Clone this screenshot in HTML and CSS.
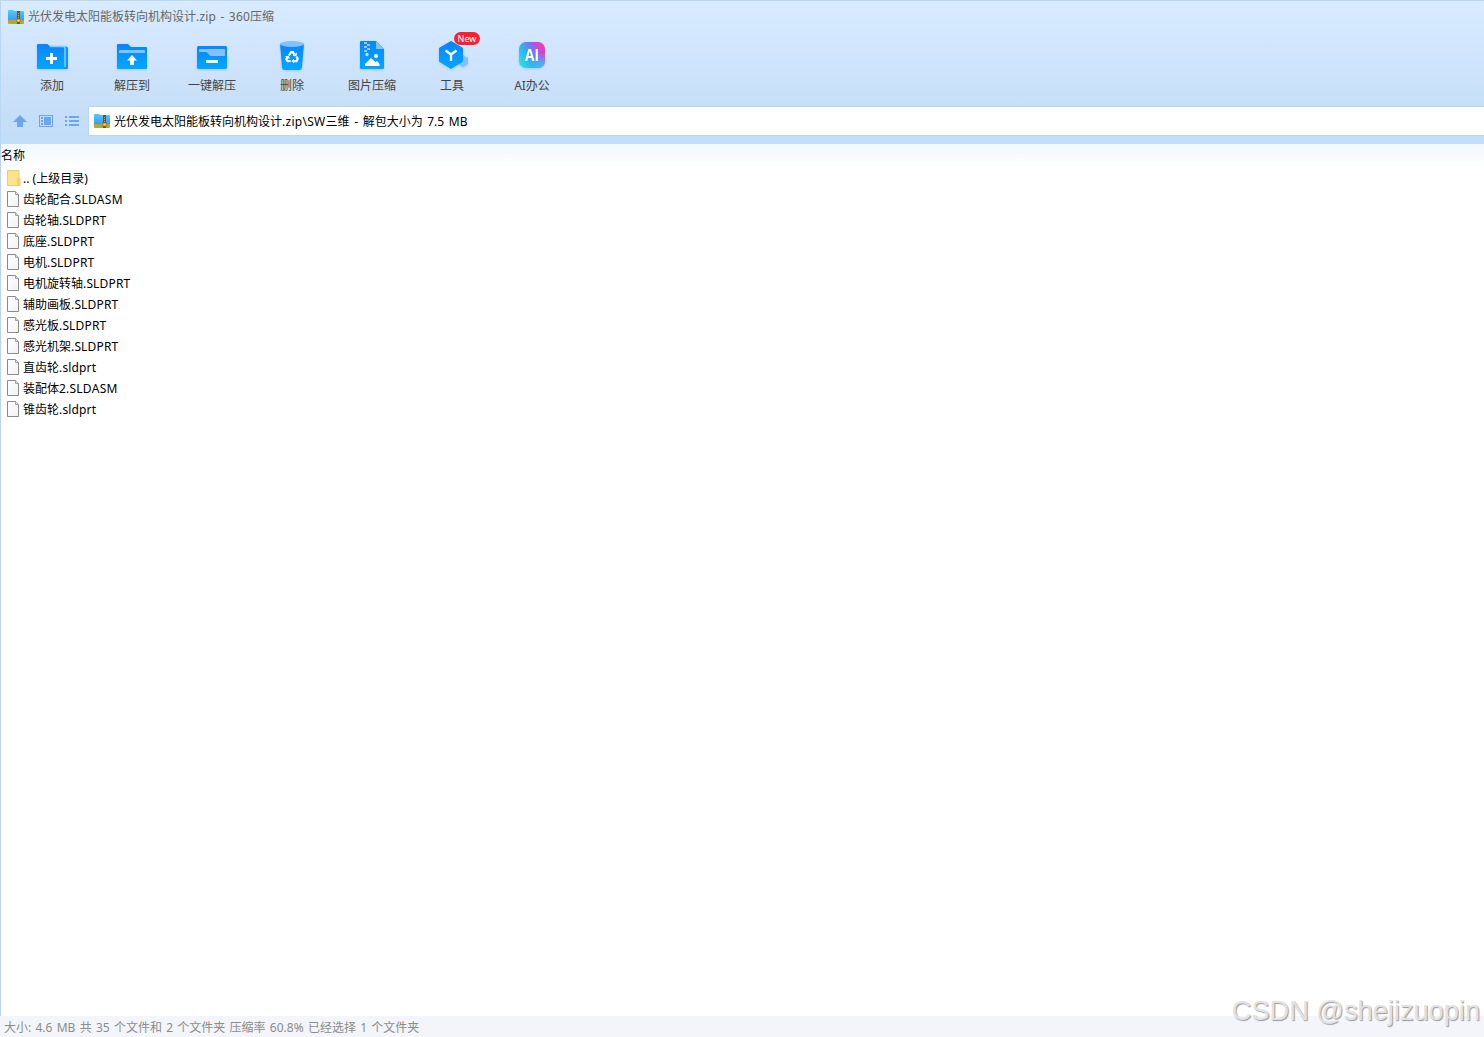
FILE: index.html
```html
<!DOCTYPE html>
<html lang="zh-CN">
<head>
    <meta charset="UTF-8">
    <meta name="viewport" content="width=device-width, initial-scale=1.0">
    <title>360压缩</title>
    <link rel="stylesheet" href="styles.css">
</head>
<body>
    <!-- shared shapes -->
    <svg class="defs" width="0" height="0">
        <defs>
            <linearGradient id="blue" x1="0" y1="0" x2="0" y2="1">
                <stop offset="0" stop-color="#0a84ff"/>
                <stop offset="1" stop-color="#00a8ff"/>
            </linearGradient>
            <linearGradient id="sky" x1="0" y1="0" x2="0" y2="1">
                <stop offset="0" stop-color="#5cc8fa"/>
                <stop offset="1" stop-color="#2ba0ee"/>
            </linearGradient>
            <linearGradient id="rainbow" x1="0" y1="0.7" x2="1" y2="0.2">
                <stop offset="0" stop-color="#22e0e4"/>
                <stop offset="0.3" stop-color="#2fb4f0"/>
                <stop offset="0.55" stop-color="#6a7cf2"/>
                <stop offset="0.75" stop-color="#c14be6"/>
                <stop offset="1" stop-color="#f83a9c"/>
            </linearGradient>
            <radialGradient id="rainbowCorner" cx="0.9" cy="1" r="0.6">
                <stop offset="0" stop-color="#35c8f0"/>
                <stop offset="1" stop-color="#35c8f0" stop-opacity="0"/>
            </radialGradient>
            <linearGradient id="paper" x1="0" y1="0" x2="1" y2="1">
                <stop offset="0" stop-color="#ffffff"/>
                <stop offset="1" stop-color="#f1f3f4"/>
            </linearGradient>
            <symbol id="zip" viewBox="0 0 16 14">
                <path d="M0 1q0-1 1-1h4l1.500 1H15q1 0 1 1v9H0z" fill="url(#sky)"/>
                <rect y="10" width="16" height="2" fill="#f58a1c"/>
                <path d="M0 12h16v1q0 1-1 1H1q-1 0-1-1z" fill="#7cc142"/>
                <rect x="9" y="1" width="3" height="13" fill="#8a4a16"/>
                <path d="M10 3h1v1h-1zM10 5h1v1h-1zM10 7h1v1h-1z" fill="#e0a050"/>
                <rect x="9" y="9" width="3" height="3" fill="#ffe36a" stroke="#a8620c" stroke-width=".7"/>
            </symbol>
            <symbol id="file" viewBox="0 0 12 16">
                <path d="M.5.5h8l3 3v12H.5z" fill="url(#paper)" stroke="#8b8b8b"/>
                <path d="M8.500.5v3h3" fill="#d8dcde" stroke="#a2a2a2"/>
            </symbol>
        </defs>
    </svg>

    <div class="window">
        <div class="top">
            <div class="titlebar">
                <svg class="zip-icon" width="16" height="14"><use href="#zip"/></svg>
                <span>光伏发电太阳能板转向机构设计<span class="title-zip">.zip - 360</span>压缩</span>
            </div>

            <div class="toolbar">
                <div class="tool">
                    <svg width="36" height="36" viewBox="0 0 36 36">
                        <path d="M29 6.500h3q2 0 2 2V28q0 1-1 1h-4z" fill="#0797ff"/>
                        <path d="M3 5q0-1 1-1h9.500l3 3H28q2 0 2 2v20H4q-1 0-1-1z" fill="url(#blue)"/>
                        <path d="M16 6.500h13.500q1.500 0 1.500 1.500v19" fill="none" stroke="#8ccbff" stroke-width="1.500"/>
                        <path d="M12 18.500h11M17.500 13v11" stroke="#fff" stroke-width="3"/>
                    </svg>
                    <span>添加</span>
                </div>
                <div class="tool">
                    <svg width="36" height="36" viewBox="0 0 36 36">
                        <path d="M3 5q0-1 1-1h10l3 3h15q1 0 1 1v20q0 1-1 1H4q-1 0-1-1z" fill="url(#blue)"/>
                        <path d="M5 13v-2q0-1 1-1h24q1 0 1 1v2z" fill="#80c3ff"/>
                        <path d="M18 15l5 5.500h-3V25h-4v-4.500h-3z" fill="#fff"/>
                    </svg>
                    <span>解压到</span>
                </div>
                <div class="tool">
                    <svg width="36" height="36" viewBox="0 0 36 36">
                        <rect x="3" y="6" width="30" height="23" rx="1.500" fill="url(#blue)"/>
                        <path d="M5 12v-2q0-1 1-1h24q1 0 1 1v6H16.500L12.500 12z" fill="#80c3ff"/>
                        <rect x="12" y="20" width="12" height="3" rx="1" fill="#fff"/>
                    </svg>
                    <span>一键解压</span>
                </div>
                <div class="tool">
                    <svg width="36" height="36" viewBox="0 0 36 36">
                        <path d="M6 4h24l-2 23.500q-.3 2.500-3 2.500H11q-2.700 0-3-2.500z" fill="url(#blue)"/>
                        <ellipse cx="18" cy="4" rx="12" ry="3" fill="#80c3ff"/>
                        <g fill="none" stroke="#fff" stroke-width="2.200">
                            <path d="M15 15.500l2-3.300h2l1.500 2.600"/>
                            <path d="M22.400 16.500l1.300 2.300-1.200 2.400h-3.300"/>
                            <path d="M16.700 21.200h-3.200l-1.200-2.200 1.300-2.300"/>
                        </g>
                        <path d="M18.500 16l4 .3.500-3.800zM20 18.800v4.800l-2.600-2.400zM11 16.300l3.800-.5 1.200 3.500z" fill="#fff"/>
                    </svg>
                    <span>删除</span>
                </div>
                <div class="tool">
                    <svg width="36" height="36" viewBox="0 0 36 36">
                        <path d="M6 2q0-1 1-1h15l8 8v19q0 1-1 1H7q-1 0-1-1z" fill="url(#blue)"/>
                        <path d="M22 1l8 8h-8z" fill="#80c3ff"/>
                        <path d="M10 2h3v2h3v2h-3v2h3v2h-3v2h-3v-2h3V8h-3V6h3V4h-3z" fill="#8cceff"/>
                        <circle cx="13" cy="14.500" r="1.700" fill="#b3ddff"/>
                        <circle cx="22" cy="16" r="2" fill="#fff"/>
                        <path d="M11 26v-2l6-6 4.500 4 1.500-1 2.500 3v2z" fill="#fff"/>
                    </svg>
                    <span>图片压缩</span>
                </div>
                <div class="tool">
                    <svg width="36" height="36" viewBox="0 0 36 36">
                        <path d="M28 14.500l6 3.500v6l-5 3-5-3z" fill="#80c0fa"/>
                        <path d="M17 1.500l11.500 6.600v13.300L17 28.500 5.500 21.400V8.100z" fill="url(#blue)" stroke="url(#blue)" stroke-linejoin="round"/>
                        <path d="M11.500 10.500l5.500 4 5.500-4M17 14v7" fill="none" stroke="#fff" stroke-width="2.300"/>
                    </svg>
                    <span>工具</span>
                    <span class="badge">New</span>
                </div>
                <div class="tool">
                    <svg width="36" height="36" viewBox="0 0 36 36">
                        <rect x="5" y="2" width="26" height="26" rx="7" fill="url(#rainbow)"/>
                        <rect x="5" y="2" width="26" height="26" rx="7" fill="url(#rainbowCorner)"/>
                        <text class="ai" x="18" y="20.500" textLength="14" lengthAdjust="spacingAndGlyphs" text-anchor="middle">AI</text>
                    </svg>
                    <span>AI办公</span>
                </div>
            </div>

            <div class="address-row">
                <div class="nav">
                    <svg width="14" height="14" viewBox="0 0 14 14"><path d="M7 1l7 7h-4v5H4V8H0z" fill="#6ba5ed"/></svg>
                    <svg width="14" height="14" viewBox="0 0 14 14">
                        <rect x=".5" y="1.500" width="13" height="11" fill="none" stroke="#6ba5ed"/>
                        <path d="M2 3h2v2H2zM2 6h2v2H2zM2 9h2v2H2zM5 3h7v8H5z" fill="#6ba5ed"/>
                    </svg>
                    <svg width="14" height="14" viewBox="0 0 14 14"><path d="M0 2h2v2H0zM0 6h2v2H0zM0 10h2v2H0zM4 2h10v2H4zM4 6h10v2H4zM4 10h10v2H4z" fill="#6ba5ed"/></svg>
                </div>
                <div class="address">
                    <svg class="zip-icon" width="16" height="14"><use href="#zip"/></svg>
                    <span>光伏发电太阳能板转向机构设计<span class="path-zip">.zip\SW</span>三维 - 解包大小为 7.5 MB</span>
                </div>
            </div>
        </div>

        <div class="list-header">名称</div>
        <ul class="files">
            <li>
                <svg width="14" height="16" viewBox="0 0 14 16">
                    <path d="M0 .5h12v8h1v7H0z" fill="#ffe28d"/>
                    <path d="M.5.5h11.500v8h1v7H.5z" fill="none" stroke="#efcd68"/>
                    <path d="M11 8.500v7" stroke="#e6bd4e"/>
                </svg>
                <span>.. (上级目录)</span>
            </li>
            <li><svg width="12" height="16"><use href="#file"/></svg><span>齿轮配合<span class="ext-asm">.SLDASM</span></span></li>
            <li><svg width="12" height="16"><use href="#file"/></svg><span>齿轮轴<span class="ext">.SLDPRT</span></span></li>
            <li><svg width="12" height="16"><use href="#file"/></svg><span>底座<span class="ext">.SLDPRT</span></span></li>
            <li><svg width="12" height="16"><use href="#file"/></svg><span>电机<span class="ext">.SLDPRT</span></span></li>
            <li><svg width="12" height="16"><use href="#file"/></svg><span>电机旋转轴<span class="ext">.SLDPRT</span></span></li>
            <li><svg width="12" height="16"><use href="#file"/></svg><span>辅助画板<span class="ext">.SLDPRT</span></span></li>
            <li><svg width="12" height="16"><use href="#file"/></svg><span>感光板<span class="ext">.SLDPRT</span></span></li>
            <li><svg width="12" height="16"><use href="#file"/></svg><span>感光机架<span class="ext">.SLDPRT</span></span></li>
            <li><svg width="12" height="16"><use href="#file"/></svg><span>直齿轮<span class="ext">.sldprt</span></span></li>
            <li><svg width="12" height="16"><use href="#file"/></svg><span>装配体2<span class="ext-asm">.SLDASM</span></span></li>
            <li><svg width="12" height="16"><use href="#file"/></svg><span>锥齿轮<span class="ext">.sldprt</span></span></li>
        </ul>
    </div>
    <div class="statusbar">大小: 4.6 MB 共 35 个文件和 2 个文件夹 压缩率 60.8% 已经选择 1 个文件夹</div>
    <div class="watermark">CSDN @shejizuopin</div>
</body>
</html>
```

FILE: styles.css
```css
* {
    box-sizing: border-box;
}

body {
    display: flex;
    flex-direction: column;
    height: 100vh;
    margin: 0;
    overflow: hidden;
    position: relative;
    background: #fff;
    color: #000;
    font-family: "Noto Sans", "Noto Sans CJK SC", sans-serif;
    font-size: 12px;
    line-height: 20px;
    white-space: nowrap;
}

svg {
    display: block;
    flex: none;
}

.defs {
    position: absolute;
}

.window {
    flex: 1;
    border-left: 1px solid #b9d3f5;
}

.top {
    height: 144px;
    margin-left: -1px;
    border-top: 1px solid #b9d6f2;
    border-left: 1px solid #b9d6f2;
    background: linear-gradient(#d8ebff, #d1e6fd 45px, #c7dff8 105px, #c3def9 135px);
}

.titlebar {
    display: flex;
    align-items: center;
    height: 31px;
    padding-left: 7px;
    gap: 4px;
    color: #666;
}

.title-zip {
    letter-spacing: 0.2px;
    word-spacing: 1px;
}

.toolbar {
    display: flex;
    height: 74px;
    padding-left: 11px;
}

.tool {
    position: relative;
    display: flex;
    flex-direction: column;
    align-items: center;
    width: 80px;
    padding-top: 8px;
    color: #444;
}

.tool > svg {
    overflow: visible;
    filter: drop-shadow(0 1px 1px rgba(0, 110, 230, .2));
}

.badge {
    position: absolute;
    top: 0;
    left: 42px;
    width: 26px;
    height: 13px;
    border-radius: 7px;
    background: #fa2030;
    color: #fff;
    font-size: 9px;
    line-height: 13px;
    text-align: center;
}

.ai {
    fill: #fff;
    font: bold 16px "Open Sans", sans-serif;
}

.address-row {
    display: flex;
    height: 30px;
}

.nav {
    display: flex;
    align-items: center;
    width: 87px;
    padding-left: 12px;
    gap: 12px;
}

.address {
    display: flex;
    flex: 1;
    align-items: center;
    padding-left: 5px;
    gap: 4px;
    border: solid #b9d6f2;
    border-width: 1px 0 1px 1px;
    background: #fff;
    word-spacing: 1.500px;
}

.address span {
    line-height: 22px;
    padding-top: 1px;
}

.path-zip {
    letter-spacing: 0.28px;
}

.list-header {
    height: 24px;
    line-height: 23px;
    background: linear-gradient(#f2f8fe, #fff);
}

.files {
    margin: 0;
    padding: 0 0 0 6px;
    list-style: none;
}

.files li {
    display: flex;
    align-items: center;
    height: 21px;
}

.files svg {
    margin: 0 4px 2px 0;
}

.files li:first-child svg {
    margin-right: 2px;
}

.ext {
    letter-spacing: 0.15px;
}

.ext-asm {
    letter-spacing: 0.3px;
}

.statusbar {
    height: 21px;
    padding-left: 4px;
    background: #f3f5fa;
    color: #8c8c8c;
    line-height: 24px;
    word-spacing: 1.150px;
}

.watermark {
    position: absolute;
    right: 4px;
    bottom: 8px;
    color: #e2e2e4;
    font-family: "Liberation Sans", sans-serif;
    font-size: 27.200px;
    line-height: 36px;
    text-shadow: 1px 1px 1px #999;
}
```
